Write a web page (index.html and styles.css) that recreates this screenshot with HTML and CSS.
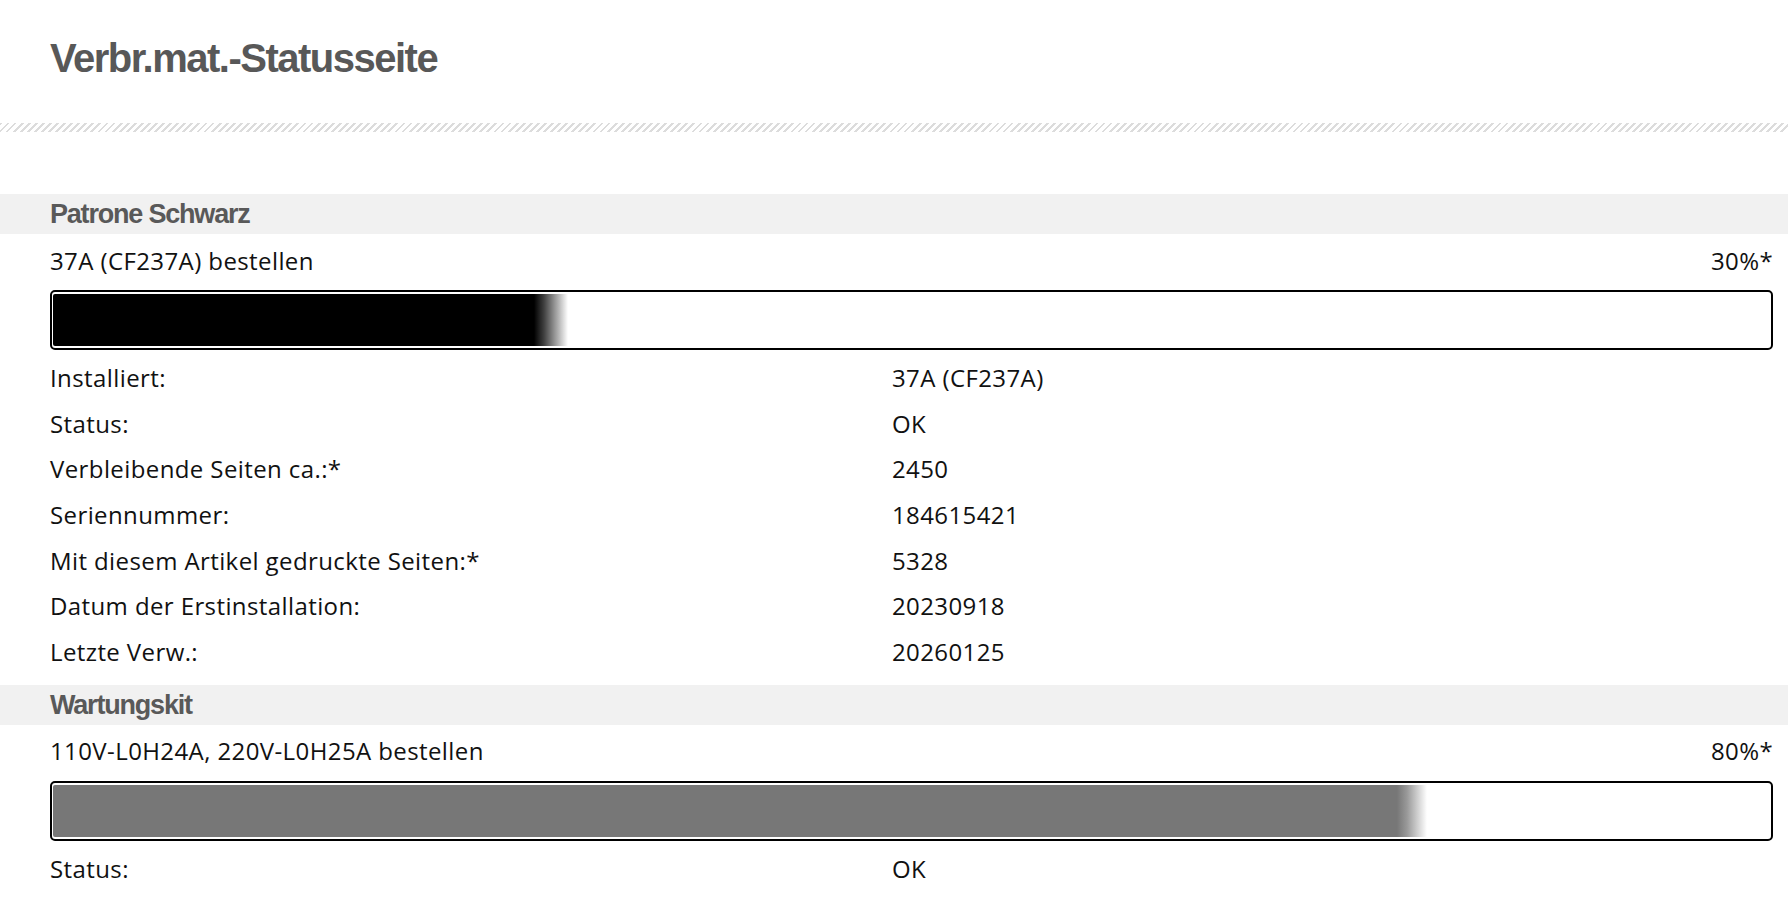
FILE: index.html
```html
<!DOCTYPE html>
<html lang="de">
<head>
<meta charset="utf-8">
<title>Verbr.mat.-Statusseite</title>
<link rel="stylesheet" href="styles.css">
</head>
<body>
<header class="page-head">
  <h1 class="title">Verbr.mat.-Statusseite</h1>
</header>
<div class="hatch"></div>

<section class="supply">
  <h2 class="supply-name">Patrone Schwarz</h2>
  <div class="supply-body">
    <div class="order-row"><span>37A (CF237A) bestellen</span><span>30%*</span></div>
    <div class="gauge"><div class="gauge-fill black" style="width:30%"></div></div>
    <dl class="details">
      <dt>Installiert:</dt><dd>37A (CF237A)</dd>
      <dt>Status:</dt><dd>OK</dd>
      <dt>Verbleibende Seiten ca.:*</dt><dd>2450</dd>
      <dt>Seriennummer:</dt><dd>184615421</dd>
      <dt>Mit diesem Artikel gedruckte Seiten:*</dt><dd>5328</dd>
      <dt>Datum der Erstinstallation:</dt><dd>20230918</dd>
      <dt>Letzte Verw.:</dt><dd>20260125</dd>
    </dl>
  </div>
</section>

<section class="supply second">
  <h2 class="supply-name">Wartungskit</h2>
  <div class="supply-body">
    <div class="order-row"><span>110V-L0H24A, 220V-L0H25A bestellen</span><span>80%*</span></div>
    <div class="gauge"><div class="gauge-fill grey" style="width:80%"></div></div>
    <dl class="details">
      <dt>Status:</dt><dd>OK</dd>
    </dl>
  </div>
</section>
</body>
</html>
```

FILE: styles.css
```css
* { box-sizing: border-box; }

html, body {
  margin: 0;
  padding: 0;
  background: #ffffff;
  overflow: hidden;
}

body {
  font-family: "Open Sans", "Noto Sans", sans-serif;
  color: #111111;
}

.page-head {
  padding: 38px 15px 0 50px;
}

.title {
  margin: 0;
  font-family: "Liberation Sans", Arial, sans-serif;
  font-weight: 700;
  font-size: 40px;
  line-height: 40px;
  letter-spacing: -1.5px;
  color: #585858;
}

.hatch {
  margin-top: 45px;
  height: 9px;
  background: repeating-linear-gradient(135deg, #dcdcdc 0 2px, #ffffff 2px 5px);
}

.supply {
  margin-top: 62px;
}

.supply.second {
  margin-top: 10px;
}

.supply-name {
  margin: 0;
  height: 40px;
  padding-left: 50px;
  background: #f1f1f1;
  font-family: "Liberation Sans", Arial, sans-serif;
  font-weight: 700;
  font-size: 27px;
  line-height: 40px;
  letter-spacing: -1.2px;
  color: #595959;
}

.supply-body {
  padding: 0 15px 0 50px;
}

.order-row {
  margin-top: 3.5px;
  height: 46px;
  display: flex;
  justify-content: space-between;
  font-size: 24px;
  font-weight: 500;
  letter-spacing: 0.4px;
  line-height: 46px;
}

.gauge {
  margin-top: 6.5px;
  height: 60px;
  border: 2px solid #000000;
  border-radius: 5px;
  padding: 2px 1px;
  background: #ffffff;
}

.gauge-fill {
  height: 100%;
  border-radius: 2px 0 0 2px;
}

.gauge-fill.black {
  background: linear-gradient(to right, #000000 calc(100% - 34px), rgba(0,0,0,0.75) calc(100% - 24px), rgba(0,0,0,0) 100%);
}

.gauge-fill.grey {
  background: linear-gradient(to right, #777777 calc(100% - 30px), rgba(119,119,119,0.75) calc(100% - 20px), rgba(119,119,119,0) 100%);
}

.details {
  margin: 5px 0 0 0;
  display: grid;
  grid-template-columns: 842px 1fr;
  grid-auto-rows: 45.7px;
  font-size: 24px;
  font-weight: 500;
  letter-spacing: 0.4px;
  line-height: 45.7px;
}

.details dt,
.details dd {
  margin: 0;
  white-space: nowrap;
}
```
